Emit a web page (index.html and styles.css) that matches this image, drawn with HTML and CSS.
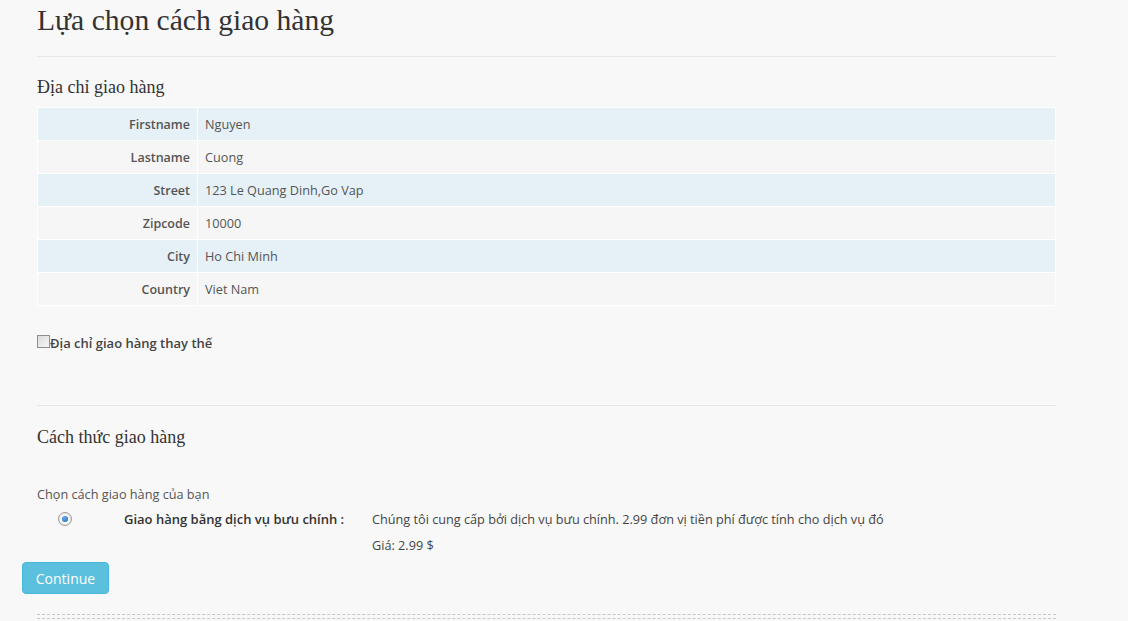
FILE: index.html
```html
<!DOCTYPE html>
<html>
<head>
<meta charset="utf-8">
<link rel="stylesheet" href="styles.css">
</head>
<body>
<div class="page">
  <div class="section">
    <h1 class="title">Lựa chọn cách giao hàng</h1>
    <div class="rule"></div>
    <h3 class="subtitle">Địa chỉ giao hàng</h3>
    <table class="addr">
      <tr class="odd"><th>Firstname</th><td>Nguyen</td></tr>
      <tr class="even"><th>Lastname</th><td>Cuong</td></tr>
      <tr class="odd"><th>Street</th><td>123 Le Quang Dinh,Go Vap</td></tr>
      <tr class="even"><th>Zipcode</th><td>10000</td></tr>
      <tr class="odd"><th>City</th><td>Ho Chi Minh</td></tr>
      <tr class="even"><th>Country</th><td>Viet Nam</td></tr>
    </table>
    <label class="alt"><span class="checkbox"></span>Địa chỉ giao hàng thay thế</label>
    <div class="rule rule2"></div>
    <h3 class="subtitle subtitle2">Cách thức giao hàng</h3>
    <p class="choose">Chọn cách giao hàng của bạn</p>
    <div class="method">
      <div class="radio-col"><span class="radio"><span class="dot"></span></span></div>
      <div class="method-name">Giao hàng bằng dịch vụ bưu chính :</div>
      <div class="method-desc">
        <div>Chúng tôi cung cấp bởi dịch vụ bưu chính. 2.99 đơn vị tiền phí được tính cho dịch vụ đó</div>
        <div class="price">Giá: 2.99 $</div>
      </div>
    </div>
  </div>
  <button class="btn">Continue</button>
  <div class="section">
    <div class="dash"></div>
    <div class="dash dash2"></div>
  </div>
</div>
</body>
</html>
```
FILE: styles.css
```css
html, body {
  margin: 0;
  padding: 0;
  background: #f8f8f8;
}
body {
  font-family: "Open Sans", "Liberation Sans", sans-serif;
  font-size: 12.7px;
  color: #555;
}
.page {
  width: 1034px;
  padding: 0 0 0 22px;
}
.section {
  padding: 0 0 0 15px;
  width: 1019px;
}
.title {
  font-family: "Liberation Serif", "Times New Roman", serif;
  font-weight: normal;
  font-size: 29.6px;
  line-height: 33px;
  color: #333;
  margin: 4px 0 0;
}
.rule {
  height: 1px;
  background: #e6e6e6;
  margin-top: 19px;
}
.subtitle {
  font-family: "Liberation Serif", "Times New Roman", serif;
  font-weight: normal;
  font-size: 18px;
  line-height: 20px;
  color: #333;
  margin: 20px 0 10px;
}
.addr {
  width: 100%;
  border-collapse: collapse;
  border: 1px solid #fff;
}
.addr th, .addr td {
  border: 1px solid #fff;
  padding: 8px 7px;
  line-height: 16px;
  height: 16px;
  text-align: left;
  font-weight: normal;
}
.addr th {
  width: 145px;
  text-align: right;
  font-weight: 600;
  font-size: 12.5px;
  padding-top: 9px;
  padding-bottom: 7px;
}
.odd th, .odd td { background: #e5f1f7; }
.even th, .even td { background: #f6f6f6; }
.alt {
  display: flex;
  align-items: flex-start;
  font-weight: 600;
  font-size: 13px;
  line-height: 18px;
  color: #444;
  margin-top: 28px;
}
.checkbox {
  width: 11px;
  height: 11px;
  border: 1px solid #8f8f8f;
  background: linear-gradient(135deg, #dcdcdc, #f6f6f6);
  margin-top: 1px;
  flex: none;
}
.rule2 {
  margin-top: 53px;
}
.subtitle2 {
  margin-top: 21px;
  margin-bottom: 0;
}
.choose {
  margin: 38px 0 0;
  line-height: 18px;
}
.method {
  display: flex;
  margin-top: 3px;
  line-height: 26px;
}
.radio-col {
  width: 56px;
  display: flex;
  justify-content: center;
  align-items: flex-start;
  padding-top: 6px;
}
.radio {
  width: 12px;
  height: 12px;
  border-radius: 50%;
  border: 1px solid #9a9a9a;
  background: radial-gradient(circle, #fafafa 40%, #d8d8d8);
  display: flex;
  align-items: center;
  justify-content: center;
}
.dot {
  width: 6px;
  height: 6px;
  border-radius: 50%;
  background: radial-gradient(circle at 40% 35%, #6ab0ee, #1b5fae);
}
.method-name {
  width: 248px;
  margin-left: 31px;
  font-weight: 600;
  font-size: 13px;
  color: #333;
}
.method-desc {
  color: #444;
}
.btn {
  display: block;
  margin-top: 4px;
  width: 87px;
  height: 32px;
  padding: 0;
  border: 1px solid #46b8da;
  border-radius: 4px;
  background: #5bc0de;
  color: #fff;
  font-family: "Open Sans", "Liberation Sans", sans-serif;
  font-size: 14px;
}
.dash {
  border-top: 1px dashed #c8c8c8;
  margin-top: 20px;
}
.dash2 {
  margin-top: 3px;
}
```
